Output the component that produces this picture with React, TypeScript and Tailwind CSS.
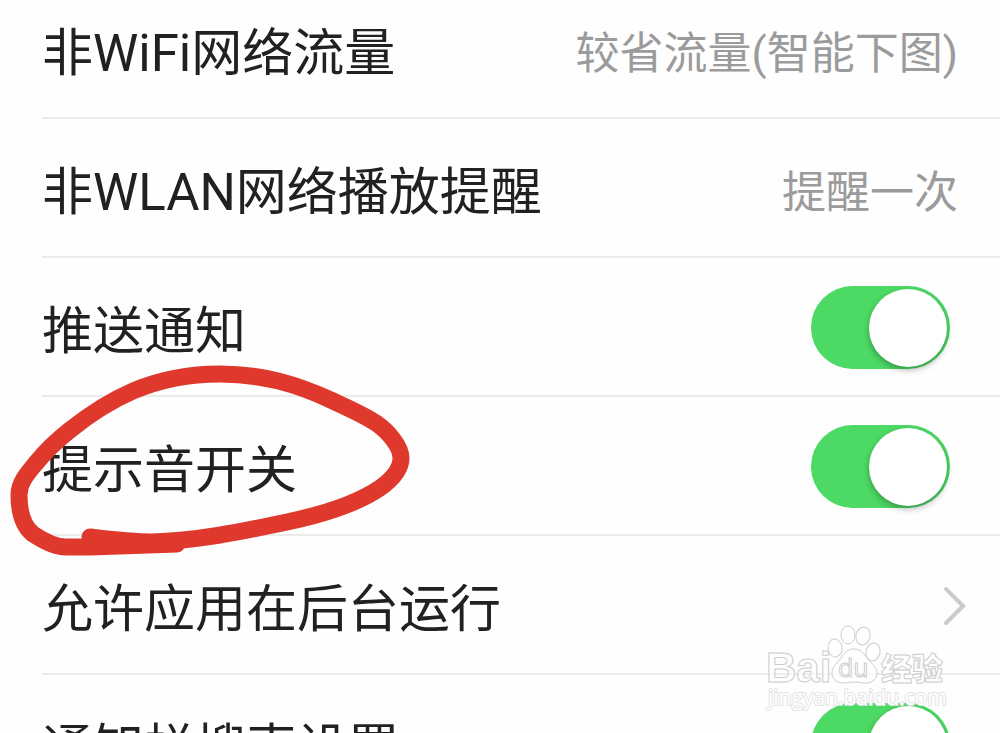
import type { ReactNode } from "react";

function Row({ children }: { children: ReactNode }) {
  return (
    <li className="flex h-[139px] items-center justify-between border-b-2 border-[#ebebeb] pt-0.5">
      {children}
    </li>
  );
}

function ValueRow({ label, value }: { label: string; value: string }) {
  return (
    <Row>
      <button type="button" className="flex w-full items-center justify-between pt-2 pr-[42px] text-left">
        <span>{label}</span>
        <span className="text-[44px] text-[#9b9b9b]">{value}</span>
      </button>
    </Row>
  );
}

function SwitchRow({ id, label }: { id: string; label: string }) {
  return (
    <Row>
      <label htmlFor={id} className="pt-2">
        {label}
      </label>
      <input
        id={id}
        type="checkbox"
        role="switch"
        defaultChecked
        className="mr-[50px] flex h-[83px] w-[139px] shrink-0 cursor-pointer appearance-none items-center rounded-full bg-[#d9d9d9] px-[3px] before:block before:size-[78px] before:rounded-full before:bg-white before:shadow-[0_3px_6px_rgba(0,0,0,0.3)] checked:justify-end checked:bg-[#4cd964]"
      />
    </Row>
  );
}

// Hand-drawn marker ring around the sound switch
function MarkerRing() {
  return (
    <svg
      className="pointer-events-none absolute top-[360px] left-0"
      width="420"
      height="200"
      viewBox="0 360 420 200"
      fill="none"
      stroke="#df382c"
      strokeWidth="17"
      strokeLinecap="round"
      strokeLinejoin="round"
      aria-hidden="true"
    >
      <path d="M90 537C115 540 135 542 152 542C195 541 240 532 287 522C325 514 358 503 380 488C394 478 401 468 401 458C401 447 389 432 376 423C364 415 350 409 333 401C297 384 262 374 220 374C190 374 159 380 133 391C110 401 90 414 70 430C56 441 45 452 36 463C26 475 19 483 19 495C19 513 23 526 33 534C42 540 54 547 66 547H90L177 544" />
    </svg>
  );
}

function Watermark() {
  return (
    <svg
      className="pointer-events-none absolute top-[620px] right-[50px]"
      width="190"
      height="100"
      viewBox="760 620 190 100"
      fill="#fff"
      fillOpacity="0.7"
      stroke="#cdcdcd"
      strokeWidth="1"
      strokeLinejoin="round"
      aria-hidden="true"
    >
      <text x="766" y="682" className="font-['Liberation_Sans',sans-serif] text-[42px] font-bold">
        Bai
      </text>
      <ellipse cx="835" cy="648" rx="7" ry="9" transform="rotate(-8 835 648)" />
      <ellipse cx="848" cy="635" rx="7" ry="9" />
      <ellipse cx="863" cy="636" rx="7" ry="9" transform="rotate(12 863 636)" />
      <ellipse cx="873" cy="652" rx="7" ry="9" transform="rotate(12 873 652)" />
      <path d="M854 649C848 649 844 653 841 658C838 663 832 666 832 673C832 679 837 683 843 683C848 683 850 682 854 682C859 682 861 683 866 683C872 683 877 679 877 673C877 666 870 663 867 658C864 653 860 649 854 649Z" />
      <text x="838" y="677" className="font-['Open_Sans',sans-serif] text-[25px]">
        du
      </text>
      <text x="881" y="680" className="font-['Noto_Sans_CJK_SC',sans-serif] text-[31px] font-black">
        经验
      </text>
      <text
        x="768"
        y="705"
        strokeWidth="2"
        paintOrder="stroke"
        stroke="#e4e4e4"
        fillOpacity="1"
        className="font-['Open_Sans',sans-serif] text-[21px]"
      >
        jingyan.baidu.com
      </text>
    </svg>
  );
}

export default function App() {
  return (
    <main className="relative h-screen overflow-hidden bg-[#fefefe] font-[Roboto,'Noto_Sans_CJK_SC',sans-serif] text-[51px] leading-[60px] text-[#212121]">
      <ul className="-mt-5 pl-[42px]">
        <ValueRow label="非WiFi网络流量" value="较省流量(智能下图)" />
        <ValueRow label="非WLAN网络播放提醒" value="提醒一次" />
        <SwitchRow id="push" label="推送通知" />
        <SwitchRow id="sound" label="提示音开关" />
        <Row>
          <a href="#background" className="flex w-full items-center justify-between pr-[34px]">
            <span className="pt-2">允许应用在后台运行</span>
            <svg
              width="24"
              height="40"
              viewBox="0 0 24 40"
              fill="none"
              stroke="#cbcbcb"
              strokeWidth="4"
              strokeLinecap="round"
              aria-hidden="true"
            >
              <path d="M4 3L21 20L4 37" />
            </svg>
          </a>
        </Row>
        <SwitchRow id="search" label="通知栏搜索设置" />
      </ul>
      <MarkerRing />
      <Watermark />
    </main>
  );
}
